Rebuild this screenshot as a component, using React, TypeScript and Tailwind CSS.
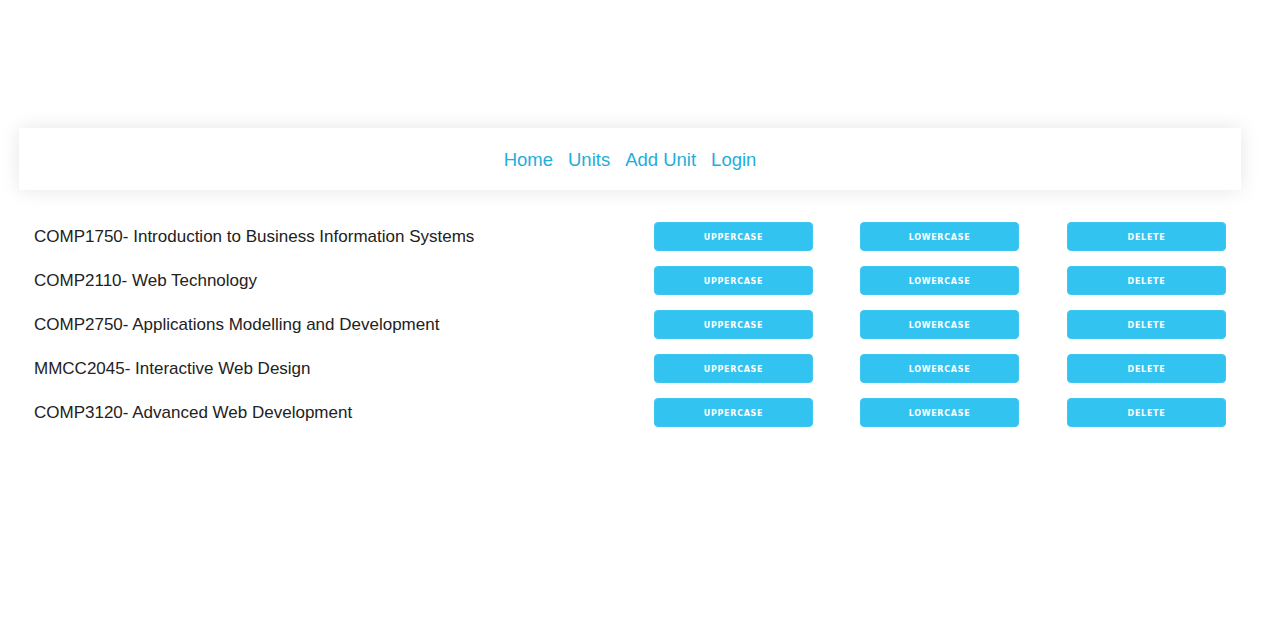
import React from "react";

const units = [
  "COMP1750- Introduction to Business Information Systems",
  "COMP2110- Web Technology",
  "COMP2750- Applications Modelling and Development",
  "MMCC2045- Interactive Web Design",
  "COMP3120- Advanced Web Development",
];

function Btn({ label }: { label: string }) {
  return (
    <button className="w-[159px] h-[29px] pt-[2px] rounded-[4px] bg-[#33c3f0] border border-[#3cc6f0] text-white text-[8px] font-bold tracking-[0.7px] uppercase flex items-center justify-center [font-family:'DejaVu_Sans',Arial,sans-serif]">
      {label}
    </button>
  );
}

export default function App() {
  return (
    <div className="w-[1280px] h-[640px] bg-white [font-family:'Liberation_Sans',Arial,sans-serif]">
      <div className="pt-[128px] pl-[19px]">
        <div className="w-[1222px]">
          <nav className="h-[62px] pt-[2px] bg-white shadow-[0_0_20px_rgba(0,0,0,0.1)] flex items-center justify-center gap-[15px] text-[18.5px] text-[#1eaedb]">
            <a>Home</a>
            <a>Units</a>
            <a>Add Unit</a>
            <a>Login</a>
          </nav>
          <div className="px-[15px] pt-[32px] flex flex-col gap-[15px]">
            {units.map((u) => (
              <div key={u} className="flex items-center h-[29px]">
                <div className="w-[620px] text-[17px] text-[#222]">{u}</div>
                <Btn label="Uppercase" />
                <div className="w-[47px]" />
                <Btn label="Lowercase" />
                <div className="w-[48px]" />
                <Btn label="Delete" />
              </div>
            ))}
          </div>
        </div>
      </div>
    </div>
  );
}
